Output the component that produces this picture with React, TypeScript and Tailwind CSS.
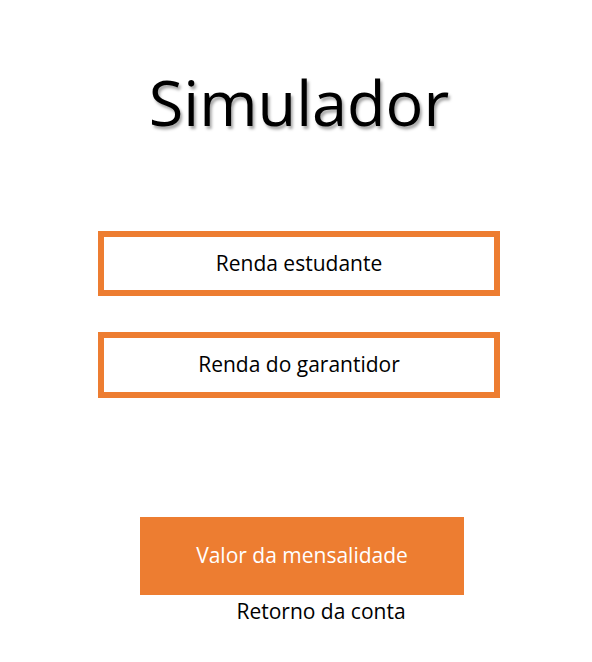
export default function App() {
  return (
    <div className="w-[592px] h-[662px] bg-white flex flex-col items-center" style={{ fontFamily: '"Open Sans", sans-serif' }}>
      <h1 className="mt-[62px] ml-[6px] text-[63px] leading-[80px] text-black [text-shadow:2px_3px_3px_rgba(0,0,0,0.35)]">Simulador</h1>
      <div className="mt-[89px] ml-[6px] w-[402px] h-[65px] border-[6px] border-[#ED7D31] flex items-center justify-center text-[21px] text-black">
        Renda estudante
      </div>
      <div className="mt-[36px] ml-[6px] w-[402px] h-[66px] border-[6px] border-[#ED7D31] flex items-center justify-center text-[21px] text-black">
        Renda do garantidor
      </div>
      <div className="mt-[119px] ml-[12px] w-[324px] h-[78px] bg-[#ED7D31] flex items-center justify-center text-[21px] text-white">
        Valor da mensalidade
      </div>
      <div className="mt-[1px] ml-[50px] text-[21px] leading-[30px] text-black">Retorno da conta</div>
    </div>
  );
}
